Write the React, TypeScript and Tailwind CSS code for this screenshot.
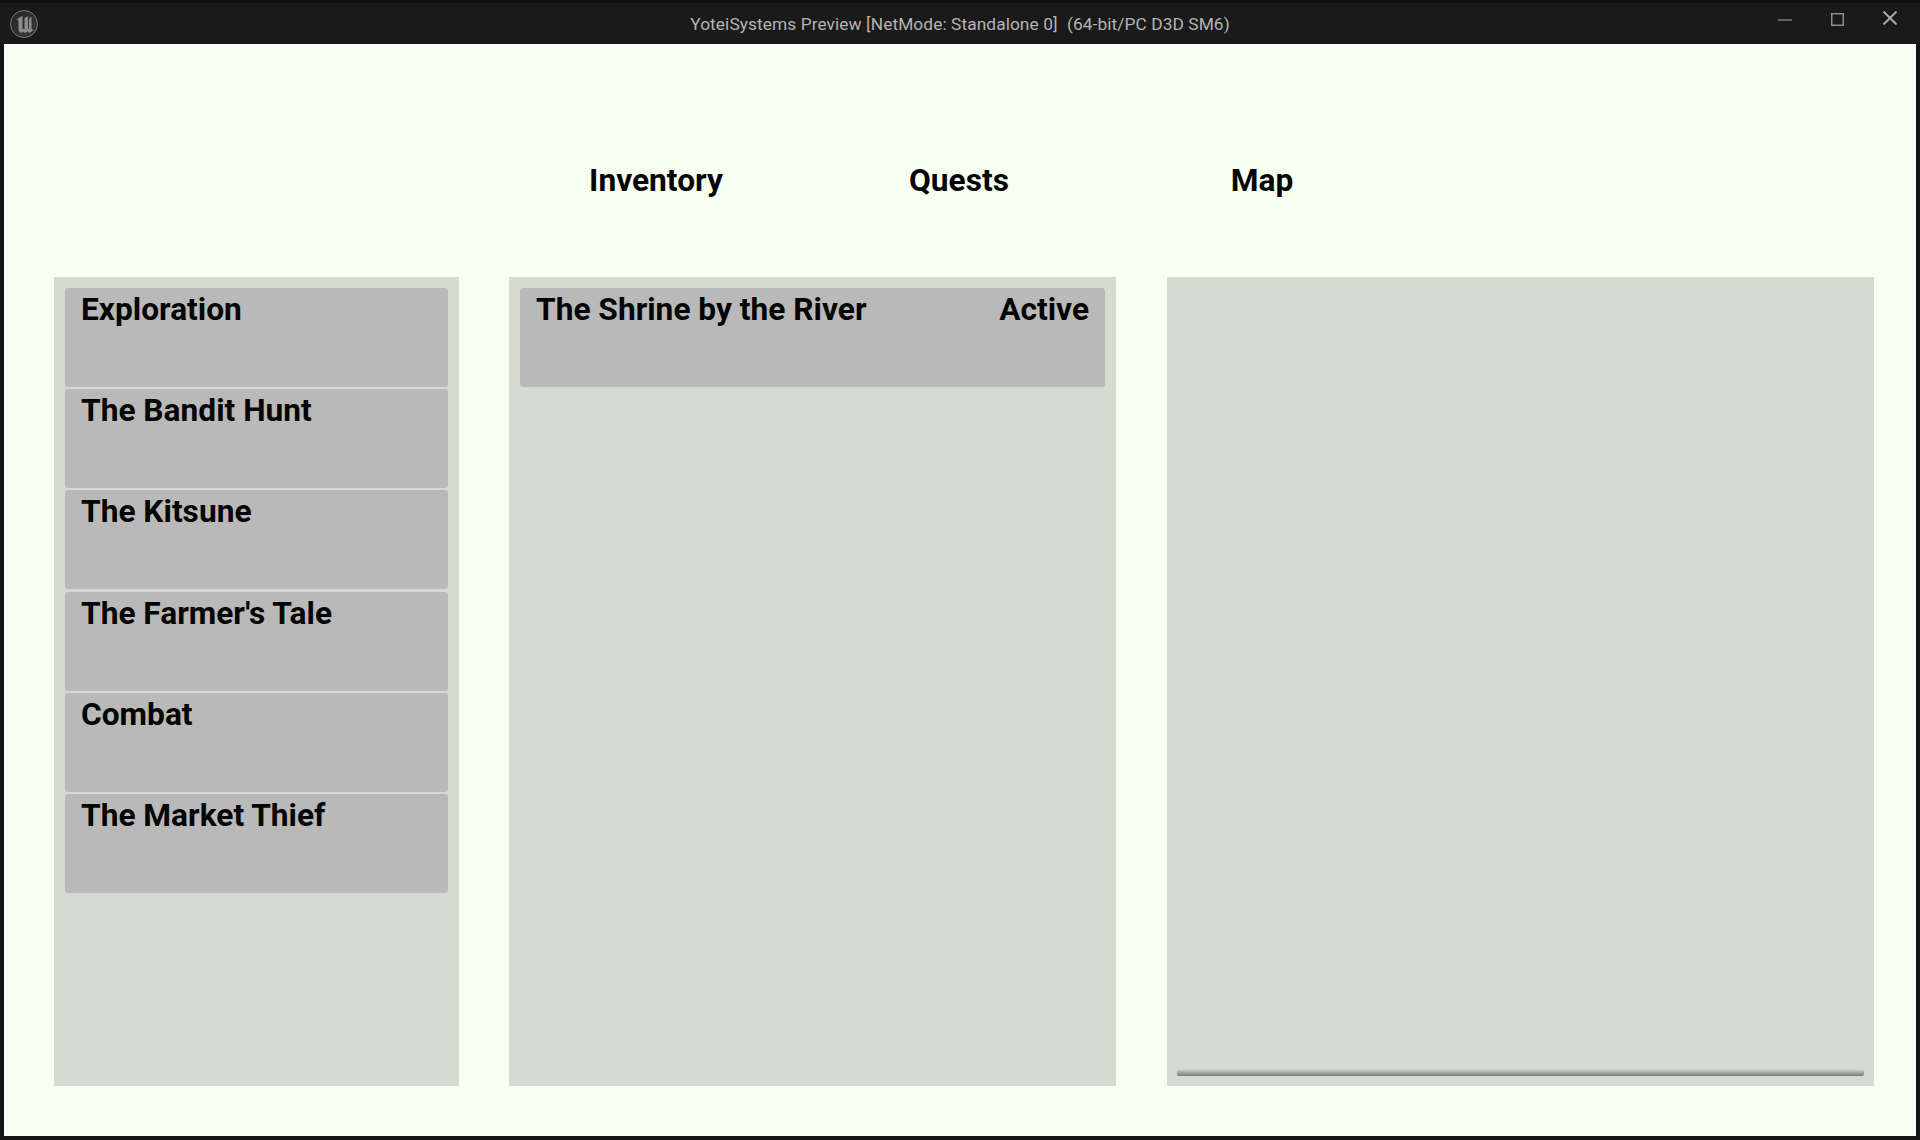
const categories = ['Exploration', 'The Bandit Hunt', 'The Kitsune', "The Farmer's Tale", 'Combat', 'The Market Thief'];
const tabs = ['Inventory', 'Quests', 'Map'];

const UnrealLogo = () => (
  <svg width="30" height="30" viewBox="0 0 30 30" className="ml-[9px]">
    <defs>
      <linearGradient id="logoGrad" x1="0%" y1="0%" x2="100%" y2="100%">
        <stop offset="0%" stopColor="#242424" />
        <stop offset="100%" stopColor="#3a3a3a" />
      </linearGradient>
    </defs>
    <circle cx="15" cy="15" r="13.5" fill="url(#logoGrad)" stroke="#787878" strokeWidth="1" />
    <path
      d="M7.500 11C9 9.500 11 8 13.500 7V19C13.500 20.300 14.500 20.500 15.500 20V9L19 7V19.500L20 20.200V11C20 9.500 21 8.500 22.500 7.500V20L24.500 21L20.500 24L18.800 22.300L16 24.300L14.500 22.600L12.500 24C10.500 23.300 9.500 22 9.500 20V12.500C9.500 11.500 8.800 11 7.500 11Z"
      fill="#8c8c8c"
    />
  </svg>
);

const WindowButtons = () => (
  <div className="flex items-start gap-[39px] pr-[23px]">
    <svg width="14" height="14" viewBox="0 0 14 14" className="mt-[10px]" fill="none" stroke="#7c7c7c" strokeWidth="1.500">
      <path d="M0 7h14" />
    </svg>
    <svg width="13" height="13" viewBox="0 0 13 13" className="mt-[10px]" fill="none" stroke="#8c8c8c" strokeWidth="1.500">
      <rect x="0.750" y="0.750" width="11.500" height="11.500" />
    </svg>
    <svg width="14" height="14" viewBox="0 0 14 14" className="mt-[8px]" fill="none" stroke="#a8a8a8" strokeWidth="2">
      <path d="M0.500 0.500l13 13M13.500 0.500l-13 13" />
    </svg>
  </div>
);

function TitleBar() {
  return (
    <div className="relative flex h-[44px] shrink-0 items-center justify-between border-t-[3px] border-t-[#111111] bg-[#1a1a1a]">
      <UnrealLogo />
      <div className="absolute inset-x-0 top-[9px] text-center text-[17.330px] leading-[24px] tracking-[0.070px] text-[#b4b4b4]">
        YoteiSystems Preview [NetMode: Standalone 0]&nbsp;<span className="ml-[5px]">(64-bit/PC D3D SM6)</span>
      </div>
      <div className="self-start">
        <WindowButtons />
      </div>
    </div>
  );
}

function Card({ title, status }: { title: string; status?: string }) {
  return (
    <div className="flex h-[99px] shrink-0 justify-between rounded-[3px] bg-[#b9b9b9] px-4 pt-[1px] text-[31.700px] font-bold leading-[42px] text-[#050505]">
      <span>{title}</span>
      {status && <span>{status}</span>}
    </div>
  );
}

export default function App() {
  return (
    <div className="flex h-[1140px] w-[1920px] flex-col overflow-hidden bg-[#151515] px-[4px] pb-[4px] font-['Roboto',sans-serif]">
      <div className="-mx-[4px]">
        <TitleBar />
      </div>
      <main className="flex min-h-0 flex-1 flex-col bg-[#f7fff2] pl-[50px] pr-[42px]">
        <nav className="-ml-[50px] -mr-[42px] flex h-[233px] shrink-0 justify-center pr-[2px]">
          {tabs.map((tab) => (
            <div key={tab} className="mt-[116px] w-[303px] text-center text-[31.700px] font-bold leading-[42px] text-[#050505]">
              {tab}
            </div>
          ))}
        </nav>
        <div className="flex h-[809px] gap-[50px]">
          <section className="flex w-[405px] shrink-0 flex-col gap-[2.200px] bg-[#d6dbd2] p-[11px]">
            {categories.map((name) => (
              <Card key={name} title={name} />
            ))}
          </section>
          <section className="flex w-[607px] shrink-0 flex-col bg-[#d6dbd2] p-[11px]">
            <Card title="The Shrine by the River" status="Active" />
          </section>
          <section className="ml-[1px] flex w-[707px] shrink-0 flex-col justify-end bg-[#d6dbd2] p-[10px]">
            <div className="h-[7px] rounded-[2px] bg-gradient-to-b from-[#d6dbd2] to-[#7b7d79]" />
          </section>
        </div>
      </main>
    </div>
  );
}
